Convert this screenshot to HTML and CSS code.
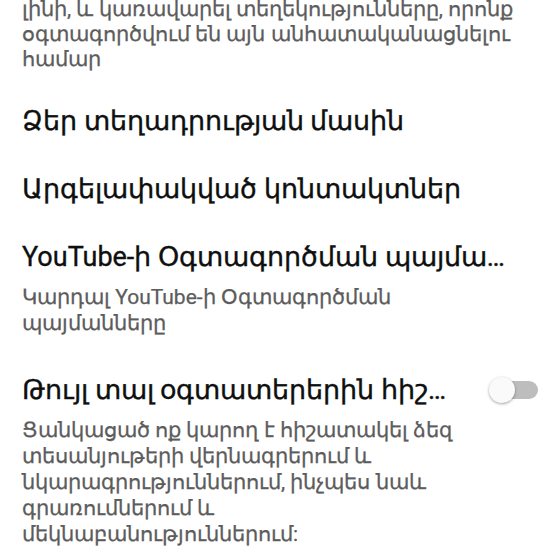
FILE: index.html
```html
<!DOCTYPE html>
<html lang="hy">
<head>
    <meta charset="UTF-8">
    <meta name="viewport" content="width=device-width, initial-scale=1.0">
    <title>Կարգավորումներ</title>
    <link rel="stylesheet" href="styles.css">
</head>
<body>
    <div class="settings">
        <p class="intro">լինի, և կառավարել տեղեկությունները, որոնք օգտագործվում են այն անհատականացնելու համար</p>

        <div class="item">
            <div class="title">Ձեր տեղադրության մասին</div>
        </div>

        <div class="item">
            <div class="title">Արգելափակված կոնտակտներ</div>
        </div>

        <div class="item">
            <div class="title">YouTube-ի Օգտագործման պայմանները</div>
            <div class="summary">Կարդալ YouTube-ի Օգտագործման պայմանները</div>
        </div>

        <div class="item item-switch">
            <div class="text">
                <div class="title">Թույլ տալ օգտատերերին հիշատակել ինձ</div>
                <div class="summary">Ցանկացած ոք կարող է հիշատակել ձեզ տեսանյութերի վերնագրերում և նկարագրություններում, ինչպես նաև գրառումներում և մեկնաբանություններում:</div>
            </div>
            <div class="switch-wrap">
                <div class="switch"><span class="thumb"></span></div>
            </div>
        </div>
    </div>
</body>
</html>
```

FILE: styles.css
```css
body {
    margin: 0;
    background: #fff;
    font-family: Roboto, "Noto Sans", sans-serif;
}
.settings {
    padding: 0 22px;
}
.intro {
    margin: -3px 20px 15px 0;
    font-size: 21px;
    line-height: 25px;
    color: #5c5c5c;
    -webkit-text-stroke: 0.25px #5c5c5c;
}
.item {
    padding: 17px 20px 17px 0;
}
.title {
    font-size: 27px;
    line-height: 34px;
    color: #0f0f0f;
    -webkit-text-stroke: 0.35px #0f0f0f;
    white-space: nowrap;
    overflow: hidden;
    text-overflow: ellipsis;
}
.summary {
    margin-top: 10px;
    font-size: 21px;
    line-height: 26px;
    color: #5c5c5c;
    -webkit-text-stroke: 0.25px #5c5c5c;
}
.item-switch {
    display: flex;
    gap: 20px;
    padding: 20px 0 17px 0;
}
.text {
    flex: 1;
    min-width: 0;
}
.switch-wrap {
    flex: none;
    width: 50px;
    height: 34px;
    display: flex;
    align-items: center;
    justify-content: flex-end;
}
.switch {
    position: relative;
    width: 44px;
    height: 18px;
    border-radius: 9px;
    background: #bdbdbd;
}
.thumb {
    position: absolute;
    left: -5px;
    top: -4px;
    width: 26px;
    height: 26px;
    border-radius: 50%;
    background: #fafafa;
    box-shadow: 0 1px 3px rgba(0, 0, 0, 0.35);
}
```
